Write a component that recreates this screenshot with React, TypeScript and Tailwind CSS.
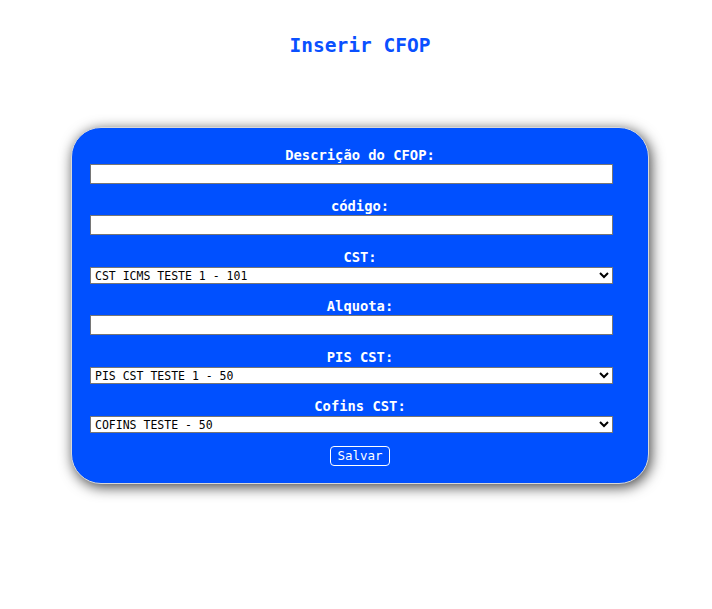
import React from "react";

const mono = "font-['DejaVu_Sans_Mono',monospace]";

const Label = ({ children }: { children: React.ReactNode }) => (
  <label className="block text-center text-[13.8px] leading-[17px] font-bold text-white">
    {children}
  </label>
);

const TextInput = () => (
  <input
    type="text"
    className="block w-[523px] h-[20px] bg-white border border-[#767676] outline-none"
  />
);

const Select = ({ value }: { value: string }) => (
  <select
    defaultValue={value}
    className="block mt-[1px] w-[523px] h-[17px] bg-white border border-[#767676] text-black text-[11.5px] leading-[15px] pl-0"
  >
    <option value={value}>{value}</option>
  </select>
);

export default function App() {
  return (
    <div className={`min-h-[609px] bg-white ${mono}`}>
      <div className="ml-[71px] w-[578px]">
        <h2 className="pt-[34px] text-center text-[19.5px] leading-[24px] font-bold text-[#0a50ff]">
          Inserir CFOP
        </h2>

        <form className="mt-[69px] h-[357px] rounded-[30px] border border-[#d8d8d8] bg-[#0050ff] shadow-[2px_3px_14px_rgba(0,0,0,0.75)] pt-[19px] px-[18px]">
          <div className="flex flex-col gap-[14px]">
            <div>
              <Label>Descrição do CFOP:</Label>
              <TextInput />
            </div>
            <div>
              <Label>código:</Label>
              <TextInput />
            </div>
            <div>
              <Label>CST:</Label>
              <Select value="CST ICMS TESTE 1 - 101" />
            </div>
            <div>
              <Label>Alquota:</Label>
              <TextInput />
            </div>
            <div>
              <Label>PIS CST:</Label>
              <Select value="PIS CST TESTE 1 - 50" />
            </div>
            <div>
              <Label>Cofins CST:</Label>
              <Select value="COFINS TESTE - 50" />
            </div>
          </div>
          <div className="mt-[13px] flex justify-center">
            <button
              type="button"
              className="h-[20px] px-[6px] rounded-[4px] border border-white text-white text-[12.5px] leading-[16px]"
            >
              Salvar
            </button>
          </div>
        </form>
      </div>
    </div>
  );
}
